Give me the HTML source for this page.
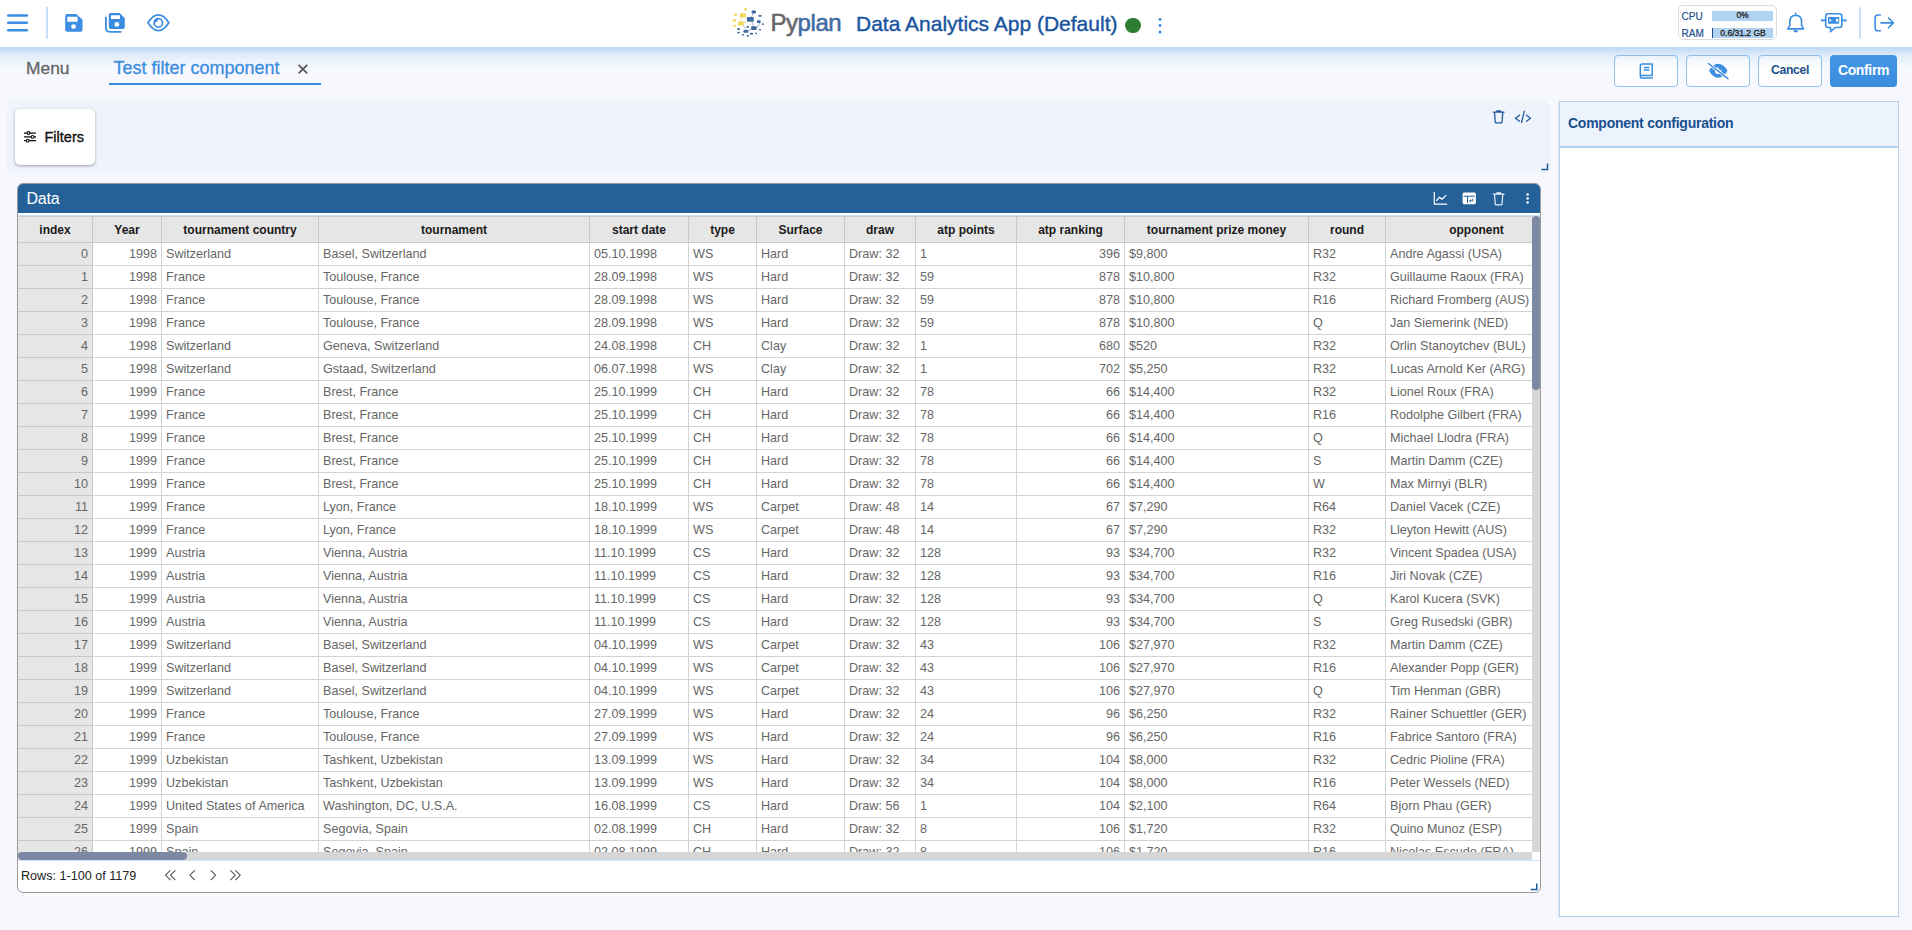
<!DOCTYPE html>
<html><head><meta charset="utf-8">
<style>
*{box-sizing:border-box;margin:0;padding:0}
html,body{width:1912px;height:930px;overflow:hidden;background:#f7f8fd;font-family:"Liberation Sans",sans-serif;position:relative}
.abs{position:absolute}
#top{position:absolute;left:0;top:0;width:1912px;height:47px;background:#fff}
#shade{position:absolute;left:0;top:47px;width:1912px;height:23px;z-index:50;background:linear-gradient(rgba(70,155,232,.36) 0px,rgba(70,155,232,.265) 3px,rgba(70,155,232,.136) 8px,rgba(70,155,232,.068) 13px,rgba(70,155,232,.028) 18px,rgba(70,155,232,0) 23px)}

.hc{position:absolute;top:0;height:26px;background:#e6e6e6;border-right:1px solid #c9c9c9;border-bottom:1px solid #c9c9c9;font-weight:bold;font-size:12px;line-height:25px;padding-top:1px;text-align:center;color:#1a1a1a;white-space:nowrap;overflow:hidden}
.row{position:absolute;left:0;height:23px;width:1600px}
.c{position:absolute;top:0;height:23px;background:#fff;border-right:1px solid #d3d3d3;border-bottom:1px solid #d3d3d3;font-size:12.6px;line-height:21px;color:#666;white-space:nowrap;overflow:hidden;padding:1px 4px 0 4px}
.c.r{text-align:right}
.c.ix{background:#e6e6e6;border-right-color:#c9c9c9;border-bottom-color:#c9c9c9}
</style></head>
<body>
<div id="shade"></div>
<div id="top">
<svg class="abs" style="left:0;top:0" width="1912" height="47" viewBox="0 0 1912 47">
 <g stroke="#3a8de0" stroke-width="2.6" stroke-linecap="round" fill="none">
  <line x1="8.3" y1="15.5" x2="26.8" y2="15.5"/>
  <line x1="8.3" y1="22.8" x2="26.8" y2="22.8"/>
  <line x1="8.3" y1="30.3" x2="26.8" y2="30.3"/>
 </g>
 <rect x="46" y="7" width="2" height="32" fill="#c5e0f8"/>
 <!-- save -->
 <path fill="#3a8de0" fill-rule="evenodd" d="M67.2 14H76.4L82.5 19.8V29.8Q82.5 31.8 80.5 31.8H67.2Q65.2 31.8 65.2 29.8V16Q65.2 14 67.2 14Z M67.3 16.8H77.6V21.7H67.3Z M73.55 26.6m-2.45 0a2.45 2.45 0 1 0 4.9 0a2.45 2.45 0 1 0 -4.9 0Z"/>
 <!-- save all -->
 <path fill="#3a8de0" fill-rule="evenodd" d="M110.8 13.1H119.8L124.8 18.2V26.9Q124.8 28.9 122.8 28.9H110.8Q108.8 28.9 108.8 26.9V15.1Q108.8 13.1 110.8 13.1Z M111 15.3H120V19.1H111Z M116.9 24.4m-2.4 0a2.4 2.4 0 1 0 4.8 0a2.4 2.4 0 1 0 -4.8 0Z"/>
 <path fill="none" stroke="#3a8de0" stroke-width="1.8" stroke-linecap="round" d="M105.9 17.4V27.4Q105.9 31.9 110.4 31.9H120.6"/>
 <!-- eye -->
 <path fill="none" stroke="#3a8de0" stroke-width="1.7" d="M148 22.7Q153 14.9 158.4 14.9Q163.8 14.9 168.8 22.7Q163.8 30.6 158.4 30.6Q153 30.6 148 22.7Z"/>
 <circle cx="158.3" cy="22.9" r="4.2" fill="none" stroke="#3a8de0" stroke-width="1.7"/>
 <path fill="#3a8de0" d="M154.3 22.5Q154.3 19 157.8 18.7L158.2 19.7Q157.8 21.9 155.2 22.6Z"/>
</svg>
<svg class="abs" style="left:0;top:0" width="1912" height="47" viewBox="0 0 1912 47"><g stroke="#3f6ba1" stroke-width="0.6" opacity="0.8"><line x1="753.8" y1="13" x2="751" y2="17.5"/><line x1="752" y1="21.5" x2="753.5" y2="26.5"/><line x1="756.5" y1="28" x2="760" y2="23"/><line x1="748" y1="31" x2="751.5" y2="29"/><line x1="743" y1="25" x2="747" y2="31"/><line x1="745.8" y1="19" x2="747" y2="19"/></g><g stroke="#f0d95e" stroke-width="0.6"><line x1="742" y1="17.4" x2="741" y2="21.6"/><line x1="743.8" y1="23" x2="747" y2="21.5"/></g><rect x="743.9" y="8.3" width="3.2" height="2.3" rx="0.8" fill="#f0d95e"/><rect x="733.8" y="13.6" width="3.2" height="2.2" rx="0.8" fill="#f0d95e"/><rect x="739.9" y="13.2" width="6" height="4.3" rx="0.8" fill="#f0d95e"/><rect x="732.6" y="19.2" width="3.3" height="2.5" rx="0.8" fill="#f0d95e"/><rect x="737.9" y="21.5" width="6" height="4" rx="0.8" fill="#f0d95e"/><rect x="732.9" y="25.1" width="3" height="1.9" rx="0.8" fill="#f0d95e"/><rect x="751.6" y="10.5" width="4.3" height="2.9" rx="0.8" fill="#3f6ba1"/><rect x="758.3" y="14.9" width="3.4" height="1.8" rx="0.8" fill="#3f6ba1"/><rect x="747" y="17.1" width="6.8" height="4.6" rx="0.8" fill="#3f6ba1"/><rect x="757" y="20.3" width="3.7" height="2.8" rx="0.8" fill="#3f6ba1"/><rect x="761.9" y="23.3" width="2.1" height="1.7" rx="0.8" fill="#3f6ba1"/><rect x="746.4" y="25.9" width="2.6" height="1.9" rx="0.8" fill="#3f6ba1"/><rect x="751.1" y="26.2" width="5.6" height="3.9" rx="0.8" fill="#3f6ba1"/><rect x="737.2" y="28.1" width="2.7" height="2" rx="0.8" fill="#3f6ba1"/><rect x="743.4" y="29.9" width="4.9" height="2.8" rx="0.8" fill="#3f6ba1"/><rect x="758.8" y="29" width="2.3" height="1.5" rx="0.8" fill="#3f6ba1"/><rect x="737.2" y="31.7" width="2.7" height="1.7" rx="0.8" fill="#3f6ba1"/><rect x="750" y="32.8" width="3.1" height="2" rx="0.8" fill="#3f6ba1"/><rect x="755.1" y="32.5" width="2" height="1.6" rx="0.8" fill="#3f6ba1"/><rect x="742" y="33.9" width="2.3" height="1.7" rx="0.8" fill="#3f6ba1"/><rect x="746.7" y="35" width="2.3" height="1.7" rx="0.8" fill="#3f6ba1"/></svg>
<div class="abs" style="left:770.5px;top:9px;font-size:24px;line-height:28px;letter-spacing:-0.45px;white-space:nowrap;-webkit-text-stroke:0.3px currentColor"><span style="color:#686868;-webkit-text-stroke:0.55px #686868">Py</span><span style="color:#3f6ba1;-webkit-text-stroke:0.55px #3f6ba1">plan</span></div>
<div class="abs" style="left:856px;top:12px;font-size:21px;line-height:24px;color:#1a55a0;white-space:nowrap;-webkit-text-stroke:0.4px #1a55a0">Data Analytics App (Default)</div>
<div class="abs" style="left:1125px;top:17.5px;width:15.6px;height:15.6px;border-radius:50%;background:#2e7d32"></div>
<svg class="abs" style="left:1150px;top:15px" width="20" height="22"><g fill="#3a8de0"><circle cx="10" cy="4.3" r="1.5"/><circle cx="10" cy="10.6" r="1.5"/><circle cx="10" cy="17" r="1.5"/></g></svg>
<div class="abs" style="left:1677.5px;top:5.3px;width:99px;height:35.2px;border:1px solid #dcdcdc;border-radius:5px;background:#fff"></div>
<div class="abs" style="left:1681.5px;top:10.5px;font-size:10px;line-height:12px;color:#1b4f8c;-webkit-text-stroke:0.2px #1b4f8c">CPU</div>
<div class="abs" style="left:1681.5px;top:27.8px;font-size:10px;line-height:12px;color:#1b4f8c;-webkit-text-stroke:0.2px #1b4f8c">RAM</div>
<div class="abs" style="left:1712.2px;top:11.1px;width:60.7px;height:9.5px;background:#b1d3f2;font-size:8.5px;line-height:9.5px;text-align:center;color:#222;-webkit-text-stroke:0.3px #222">0%</div>
<div class="abs" style="left:1712.2px;top:28.1px;width:60.7px;height:9.6px;background:#b1d3f2;font-size:8.5px;line-height:10px;text-align:center;color:#222;border-left:1.2px solid #1b4f8c;-webkit-text-stroke:0.3px #222">0.6/31.2 GB</div>
<svg class="abs" style="left:0;top:0" width="1912" height="47" viewBox="0 0 1912 47">
 <g fill="none" stroke="#3a8de0" stroke-width="1.6" stroke-linecap="round" stroke-linejoin="round">
  <path d="M1795.7 13.3V15.2M1789.8 25.6V21.8Q1789.8 15.4 1795.7 15.2Q1801.6 15.4 1801.6 21.8V25.6L1803.7 28.9H1787.7L1789.8 25.6Z"/>
  <path d="M1825.7 16.2Q1825.7 13.8 1828.1 13.8H1839.4Q1841.8 13.8 1841.8 16.2V25.1Q1841.8 27.5 1839.4 27.5H1835.2L1830.6 31.6V27.5H1828.1Q1825.7 27.5 1825.7 25.1Z"/>
  <path d="M1822 20.4H1825.7M1841.8 20.4H1845.5"/>
  <path d="M1880.4 15H1878Q1875.1 15 1875.1 17.9V27.9Q1875.1 30.8 1878 30.8H1880.4M1881 22.9H1893.4M1888.5 18L1893.4 22.9L1888.5 27.8"/>
 </g>
 <path d="M1793.2 30.2H1798.2Q1798 32.6 1795.7 32.6Q1793.4 32.6 1793.2 30.2Z" fill="#3a8de0"/>
 <rect x="1828" y="16.9" width="11.2" height="6.9" rx="0.8" fill="#3a8de0"/>
 <path d="M1829.5 18.7L1831.8 20.3L1829.5 21.9Z" fill="#fff"/><rect x="1836" y="18.8" width="2.2" height="2.8" fill="#fff"/>
 <circle cx="1821.9" cy="20.4" r="1" fill="#3a8de0"/><circle cx="1845.6" cy="20.4" r="1" fill="#3a8de0"/>
 <rect x="1859" y="7.3" width="2" height="31.3" fill="#c5e0f8"/>
</svg>
</div>
<div class="abs" id="tabs">
<div class="abs" style="left:26px;top:57.5px;font-size:17.4px;line-height:20px;color:#646464;white-space:nowrap;-webkit-text-stroke:0.3px #646464">Menu</div>
<div class="abs" style="left:113.5px;top:58px;font-size:18px;line-height:20px;color:#3a8de0;white-space:nowrap;-webkit-text-stroke:0.3px #3a8de0">Test filter component</div>
<svg class="abs" style="left:0;top:0" width="340" height="100"><path d="M298.6 64.8L307.2 73.4M307.2 64.8L298.6 73.4" stroke="#555" stroke-width="1.7"/></svg>
<div class="abs" style="left:109px;top:82.7px;width:212px;height:2px;background:#3a8de0"></div>
</div>
<div class="abs" style="left:1614px;top:55px;width:64px;height:32px;border:1px solid #8ec0f0;border-radius:4px;background:#fff"></div>
<div class="abs" style="left:1686px;top:55px;width:64px;height:32px;border:1px solid #8ec0f0;border-radius:4px;background:#fff"></div>
<div class="abs" style="left:1758px;top:55px;width:64px;height:32px;border:1px solid #8ec0f0;border-radius:4px;background:#fff;font-size:12.2px;letter-spacing:-0.3px;font-weight:bold;color:#1c4f8a;text-align:center;line-height:28px">Cancel</div>
<div class="abs" style="left:1830px;top:55px;width:67px;height:32px;border-radius:4px;background:linear-gradient(#4495e4,#3a8ddf);font-size:14px;letter-spacing:-0.35px;font-weight:bold;color:#fff;text-align:center;line-height:30px">Confirm</div>
<svg class="abs" style="left:1600px;top:45px" width="312" height="55" viewBox="0 0 312 55">
 <g fill="none" stroke="#3a8de0" stroke-width="1.4" stroke-linejoin="round">
  <path d="M40.3 30.6V21Q40.3 19 42.3 19H52.2V30.5H42.3Q40.3 30.5 40.3 31.9Q40.3 33.1 42.1 33.1H52.9" stroke-width="1.5"/>
  <path d="M43.9 22.4H49.4M43.9 25H49.4" stroke-width="1.5"/>
 </g>
 <g><path fill-rule="evenodd" d="M109 25.8Q113 18.8 118.2 18.8Q123.5 18.8 127.5 25.8Q123.5 32.8 118.2 32.8Q113 32.8 109 25.8Z M118.2 25.8m-3.3 0a3.3 3.3 0 1 0 6.6 0a3.3 3.3 0 1 0 -6.6 0Z" fill="#3a8de0"/>
 <path d="M118.4 23.2L119.3 21.8Q121.2 22.6 121.4 25.2L120.2 25.6Z" fill="#3a8de0"/>
 <path d="M108.4 18.5L128 33.6" stroke="#fff" stroke-width="3"/>
 <path d="M108.4 18.5L128 33.6" stroke="#3a8de0" stroke-width="1.5" stroke-linecap="round"/></g>
</svg>


<!-- filters panel -->
<div class="abs" style="left:7px;top:101px;width:1544px;height:72px;background:#fff"></div>
<div class="abs" style="left:7px;top:101px;width:1544px;height:72px;background:#eff3fb;border-radius:5px"></div>
<div class="abs" style="left:15px;top:109px;width:80px;height:56px;background:#fff;border-radius:5px;box-shadow:0 1px 3px rgba(0,0,0,.35)"></div>
<svg class="abs" style="left:20px;top:126px" width="22" height="22" viewBox="0 0 22 22">
 <g stroke="#111" stroke-width="1.3" fill="none">
  <path d="M4 7.2H16M4 10.9H16M4 14.7H16"/>
 </g>
 <g fill="#fff" stroke="#111" stroke-width="1.1"><circle cx="8.5" cy="7" r="1.4"/><circle cx="12.6" cy="10.9" r="1.4"/><circle cx="7.7" cy="14.8" r="1.4"/></g>
</svg>
<div class="abs" style="left:44.5px;top:128px;font-size:14.5px;line-height:18px;color:#111;-webkit-text-stroke:0.35px #111">Filters</div>
<svg class="abs" style="left:1488px;top:106px" width="64" height="68" viewBox="0 0 64 68">
 <g fill="none" stroke="#1f5a9e" stroke-width="1.3" stroke-linecap="round" stroke-linejoin="round">
  <path d="M5.3 6.2H16M8.8 6.2V4.8H12.6V6.2M6.5 6.2L7.3 16.2Q7.4 16.9 8.1 16.9H13.2Q13.9 16.9 14 16.2L14.8 6.2"/>
  <path d="M31.5 9.2L27.5 12.2L31.5 15.2M38.5 9.2L42.5 12.2L38.5 15.2M36.3 5.2L33.6 16.3"/>
  <path d="M59.5 57.5V63.5H53.5" stroke-width="1.5" stroke-linecap="butt"/>
 </g>
</svg>

<!-- data panel -->
<div class="abs" style="left:17px;top:183px;width:1524px;height:710px;border:1px solid #9a9a9a;border-radius:6px;background:#fff;overflow:hidden">
 <div class="abs" style="left:0;top:0;width:1524px;height:29px;background:#256199"></div>
 <div class="abs" style="left:0;top:29px;width:1524px;height:2px;background:#fff"></div>
 <div class="abs" style="left:0;top:31px;width:1524px;height:1px;background:#c5e0f7"></div>
 <div class="abs" style="left:0;top:32px;width:1524px;height:1px;background:#cccccc"></div>
</div>
<div class="abs" style="left:26.5px;top:189.5px;font-size:16px;letter-spacing:-0.2px;line-height:18px;color:#fff">Data</div>
<svg class="abs" style="left:1428px;top:186px" width="112" height="26" viewBox="0 0 112 26">
 <g fill="none" stroke="#fff" stroke-width="1.2" stroke-linecap="round" stroke-linejoin="round">
  <path d="M6.3 6.4V18.2H18.6M8.6 14.5L11.6 11.2L14 13.3L18 9.4"/>
  <path d="M65.3 8.2H76M68.8 8.2V6.8H72.6V8.2M66.5 8.2L67.3 18.2Q67.4 18.9 68.1 18.9H73.2Q73.9 18.9 74 18.2L74.8 8.2" stroke="#e8eef7"/>
 </g>
 <rect x="34.6" y="6.6" width="13.3" height="11.6" rx="1.6" fill="#fff"/>
 <path d="M35.6 10.2H46.9M39.5 10.2V17.2" stroke="#256199" stroke-width="1"/>
 <path d="M41.5 14.8H44.8V12.6M42.8 13.6L41.5 14.8L42.8 16" stroke="#256199" stroke-width="0.9" fill="none"/>
 <g fill="#fff"><circle cx="99.6" cy="8.6" r="1.25"/><circle cx="99.6" cy="12.6" r="1.25"/><circle cx="99.6" cy="16.6" r="1.25"/></g>
</svg>
<div class="abs" style="left:18px;top:217px;width:1514px;height:635px;overflow:hidden;background:#fff">
<div class="hc" style="left:0px;width:75px">index</div><div class="hc" style="left:75px;width:69px">Year</div><div class="hc" style="left:144px;width:157px">tournament country</div><div class="hc" style="left:301px;width:271px">tournament</div><div class="hc" style="left:572px;width:99px">start date</div><div class="hc" style="left:671px;width:68px">type</div><div class="hc" style="left:739px;width:88px">Surface</div><div class="hc" style="left:827px;width:71px">draw</div><div class="hc" style="left:898px;width:101px">atp points</div><div class="hc" style="left:999px;width:108px">atp ranking</div><div class="hc" style="left:1107px;width:184px">tournament prize money</div><div class="hc" style="left:1291px;width:77px">round</div><div class="hc" style="left:1368px;width:182px">opponent</div>
<div class="row" style="top:26px"><div class="c r ix" style="left:0px;width:75px">0</div><div class="c r" style="left:75px;width:69px">1998</div><div class="c" style="left:144px;width:157px">Switzerland</div><div class="c" style="left:301px;width:271px">Basel, Switzerland</div><div class="c" style="left:572px;width:99px">05.10.1998</div><div class="c" style="left:671px;width:68px">WS</div><div class="c" style="left:739px;width:88px">Hard</div><div class="c" style="left:827px;width:71px">Draw: 32</div><div class="c" style="left:898px;width:101px">1</div><div class="c r" style="left:999px;width:108px">396</div><div class="c" style="left:1107px;width:184px">$9,800</div><div class="c" style="left:1291px;width:77px">R32</div><div class="c" style="left:1368px;width:182px">Andre Agassi (USA)</div></div><div class="row" style="top:49px"><div class="c r ix" style="left:0px;width:75px">1</div><div class="c r" style="left:75px;width:69px">1998</div><div class="c" style="left:144px;width:157px">France</div><div class="c" style="left:301px;width:271px">Toulouse, France</div><div class="c" style="left:572px;width:99px">28.09.1998</div><div class="c" style="left:671px;width:68px">WS</div><div class="c" style="left:739px;width:88px">Hard</div><div class="c" style="left:827px;width:71px">Draw: 32</div><div class="c" style="left:898px;width:101px">59</div><div class="c r" style="left:999px;width:108px">878</div><div class="c" style="left:1107px;width:184px">$10,800</div><div class="c" style="left:1291px;width:77px">R32</div><div class="c" style="left:1368px;width:182px">Guillaume Raoux (FRA)</div></div><div class="row" style="top:72px"><div class="c r ix" style="left:0px;width:75px">2</div><div class="c r" style="left:75px;width:69px">1998</div><div class="c" style="left:144px;width:157px">France</div><div class="c" style="left:301px;width:271px">Toulouse, France</div><div class="c" style="left:572px;width:99px">28.09.1998</div><div class="c" style="left:671px;width:68px">WS</div><div class="c" style="left:739px;width:88px">Hard</div><div class="c" style="left:827px;width:71px">Draw: 32</div><div class="c" style="left:898px;width:101px">59</div><div class="c r" style="left:999px;width:108px">878</div><div class="c" style="left:1107px;width:184px">$10,800</div><div class="c" style="left:1291px;width:77px">R16</div><div class="c" style="left:1368px;width:182px">Richard Fromberg (AUS)</div></div><div class="row" style="top:95px"><div class="c r ix" style="left:0px;width:75px">3</div><div class="c r" style="left:75px;width:69px">1998</div><div class="c" style="left:144px;width:157px">France</div><div class="c" style="left:301px;width:271px">Toulouse, France</div><div class="c" style="left:572px;width:99px">28.09.1998</div><div class="c" style="left:671px;width:68px">WS</div><div class="c" style="left:739px;width:88px">Hard</div><div class="c" style="left:827px;width:71px">Draw: 32</div><div class="c" style="left:898px;width:101px">59</div><div class="c r" style="left:999px;width:108px">878</div><div class="c" style="left:1107px;width:184px">$10,800</div><div class="c" style="left:1291px;width:77px">Q</div><div class="c" style="left:1368px;width:182px">Jan Siemerink (NED)</div></div><div class="row" style="top:118px"><div class="c r ix" style="left:0px;width:75px">4</div><div class="c r" style="left:75px;width:69px">1998</div><div class="c" style="left:144px;width:157px">Switzerland</div><div class="c" style="left:301px;width:271px">Geneva, Switzerland</div><div class="c" style="left:572px;width:99px">24.08.1998</div><div class="c" style="left:671px;width:68px">CH</div><div class="c" style="left:739px;width:88px">Clay</div><div class="c" style="left:827px;width:71px">Draw: 32</div><div class="c" style="left:898px;width:101px">1</div><div class="c r" style="left:999px;width:108px">680</div><div class="c" style="left:1107px;width:184px">$520</div><div class="c" style="left:1291px;width:77px">R32</div><div class="c" style="left:1368px;width:182px">Orlin Stanoytchev (BUL)</div></div><div class="row" style="top:141px"><div class="c r ix" style="left:0px;width:75px">5</div><div class="c r" style="left:75px;width:69px">1998</div><div class="c" style="left:144px;width:157px">Switzerland</div><div class="c" style="left:301px;width:271px">Gstaad, Switzerland</div><div class="c" style="left:572px;width:99px">06.07.1998</div><div class="c" style="left:671px;width:68px">WS</div><div class="c" style="left:739px;width:88px">Clay</div><div class="c" style="left:827px;width:71px">Draw: 32</div><div class="c" style="left:898px;width:101px">1</div><div class="c r" style="left:999px;width:108px">702</div><div class="c" style="left:1107px;width:184px">$5,250</div><div class="c" style="left:1291px;width:77px">R32</div><div class="c" style="left:1368px;width:182px">Lucas Arnold Ker (ARG)</div></div><div class="row" style="top:164px"><div class="c r ix" style="left:0px;width:75px">6</div><div class="c r" style="left:75px;width:69px">1999</div><div class="c" style="left:144px;width:157px">France</div><div class="c" style="left:301px;width:271px">Brest, France</div><div class="c" style="left:572px;width:99px">25.10.1999</div><div class="c" style="left:671px;width:68px">CH</div><div class="c" style="left:739px;width:88px">Hard</div><div class="c" style="left:827px;width:71px">Draw: 32</div><div class="c" style="left:898px;width:101px">78</div><div class="c r" style="left:999px;width:108px">66</div><div class="c" style="left:1107px;width:184px">$14,400</div><div class="c" style="left:1291px;width:77px">R32</div><div class="c" style="left:1368px;width:182px">Lionel Roux (FRA)</div></div><div class="row" style="top:187px"><div class="c r ix" style="left:0px;width:75px">7</div><div class="c r" style="left:75px;width:69px">1999</div><div class="c" style="left:144px;width:157px">France</div><div class="c" style="left:301px;width:271px">Brest, France</div><div class="c" style="left:572px;width:99px">25.10.1999</div><div class="c" style="left:671px;width:68px">CH</div><div class="c" style="left:739px;width:88px">Hard</div><div class="c" style="left:827px;width:71px">Draw: 32</div><div class="c" style="left:898px;width:101px">78</div><div class="c r" style="left:999px;width:108px">66</div><div class="c" style="left:1107px;width:184px">$14,400</div><div class="c" style="left:1291px;width:77px">R16</div><div class="c" style="left:1368px;width:182px">Rodolphe Gilbert (FRA)</div></div><div class="row" style="top:210px"><div class="c r ix" style="left:0px;width:75px">8</div><div class="c r" style="left:75px;width:69px">1999</div><div class="c" style="left:144px;width:157px">France</div><div class="c" style="left:301px;width:271px">Brest, France</div><div class="c" style="left:572px;width:99px">25.10.1999</div><div class="c" style="left:671px;width:68px">CH</div><div class="c" style="left:739px;width:88px">Hard</div><div class="c" style="left:827px;width:71px">Draw: 32</div><div class="c" style="left:898px;width:101px">78</div><div class="c r" style="left:999px;width:108px">66</div><div class="c" style="left:1107px;width:184px">$14,400</div><div class="c" style="left:1291px;width:77px">Q</div><div class="c" style="left:1368px;width:182px">Michael Llodra (FRA)</div></div><div class="row" style="top:233px"><div class="c r ix" style="left:0px;width:75px">9</div><div class="c r" style="left:75px;width:69px">1999</div><div class="c" style="left:144px;width:157px">France</div><div class="c" style="left:301px;width:271px">Brest, France</div><div class="c" style="left:572px;width:99px">25.10.1999</div><div class="c" style="left:671px;width:68px">CH</div><div class="c" style="left:739px;width:88px">Hard</div><div class="c" style="left:827px;width:71px">Draw: 32</div><div class="c" style="left:898px;width:101px">78</div><div class="c r" style="left:999px;width:108px">66</div><div class="c" style="left:1107px;width:184px">$14,400</div><div class="c" style="left:1291px;width:77px">S</div><div class="c" style="left:1368px;width:182px">Martin Damm (CZE)</div></div><div class="row" style="top:256px"><div class="c r ix" style="left:0px;width:75px">10</div><div class="c r" style="left:75px;width:69px">1999</div><div class="c" style="left:144px;width:157px">France</div><div class="c" style="left:301px;width:271px">Brest, France</div><div class="c" style="left:572px;width:99px">25.10.1999</div><div class="c" style="left:671px;width:68px">CH</div><div class="c" style="left:739px;width:88px">Hard</div><div class="c" style="left:827px;width:71px">Draw: 32</div><div class="c" style="left:898px;width:101px">78</div><div class="c r" style="left:999px;width:108px">66</div><div class="c" style="left:1107px;width:184px">$14,400</div><div class="c" style="left:1291px;width:77px">W</div><div class="c" style="left:1368px;width:182px">Max Mirnyi (BLR)</div></div><div class="row" style="top:279px"><div class="c r ix" style="left:0px;width:75px">11</div><div class="c r" style="left:75px;width:69px">1999</div><div class="c" style="left:144px;width:157px">France</div><div class="c" style="left:301px;width:271px">Lyon, France</div><div class="c" style="left:572px;width:99px">18.10.1999</div><div class="c" style="left:671px;width:68px">WS</div><div class="c" style="left:739px;width:88px">Carpet</div><div class="c" style="left:827px;width:71px">Draw: 48</div><div class="c" style="left:898px;width:101px">14</div><div class="c r" style="left:999px;width:108px">67</div><div class="c" style="left:1107px;width:184px">$7,290</div><div class="c" style="left:1291px;width:77px">R64</div><div class="c" style="left:1368px;width:182px">Daniel Vacek (CZE)</div></div><div class="row" style="top:302px"><div class="c r ix" style="left:0px;width:75px">12</div><div class="c r" style="left:75px;width:69px">1999</div><div class="c" style="left:144px;width:157px">France</div><div class="c" style="left:301px;width:271px">Lyon, France</div><div class="c" style="left:572px;width:99px">18.10.1999</div><div class="c" style="left:671px;width:68px">WS</div><div class="c" style="left:739px;width:88px">Carpet</div><div class="c" style="left:827px;width:71px">Draw: 48</div><div class="c" style="left:898px;width:101px">14</div><div class="c r" style="left:999px;width:108px">67</div><div class="c" style="left:1107px;width:184px">$7,290</div><div class="c" style="left:1291px;width:77px">R32</div><div class="c" style="left:1368px;width:182px">Lleyton Hewitt (AUS)</div></div><div class="row" style="top:325px"><div class="c r ix" style="left:0px;width:75px">13</div><div class="c r" style="left:75px;width:69px">1999</div><div class="c" style="left:144px;width:157px">Austria</div><div class="c" style="left:301px;width:271px">Vienna, Austria</div><div class="c" style="left:572px;width:99px">11.10.1999</div><div class="c" style="left:671px;width:68px">CS</div><div class="c" style="left:739px;width:88px">Hard</div><div class="c" style="left:827px;width:71px">Draw: 32</div><div class="c" style="left:898px;width:101px">128</div><div class="c r" style="left:999px;width:108px">93</div><div class="c" style="left:1107px;width:184px">$34,700</div><div class="c" style="left:1291px;width:77px">R32</div><div class="c" style="left:1368px;width:182px">Vincent Spadea (USA)</div></div><div class="row" style="top:348px"><div class="c r ix" style="left:0px;width:75px">14</div><div class="c r" style="left:75px;width:69px">1999</div><div class="c" style="left:144px;width:157px">Austria</div><div class="c" style="left:301px;width:271px">Vienna, Austria</div><div class="c" style="left:572px;width:99px">11.10.1999</div><div class="c" style="left:671px;width:68px">CS</div><div class="c" style="left:739px;width:88px">Hard</div><div class="c" style="left:827px;width:71px">Draw: 32</div><div class="c" style="left:898px;width:101px">128</div><div class="c r" style="left:999px;width:108px">93</div><div class="c" style="left:1107px;width:184px">$34,700</div><div class="c" style="left:1291px;width:77px">R16</div><div class="c" style="left:1368px;width:182px">Jiri Novak (CZE)</div></div><div class="row" style="top:371px"><div class="c r ix" style="left:0px;width:75px">15</div><div class="c r" style="left:75px;width:69px">1999</div><div class="c" style="left:144px;width:157px">Austria</div><div class="c" style="left:301px;width:271px">Vienna, Austria</div><div class="c" style="left:572px;width:99px">11.10.1999</div><div class="c" style="left:671px;width:68px">CS</div><div class="c" style="left:739px;width:88px">Hard</div><div class="c" style="left:827px;width:71px">Draw: 32</div><div class="c" style="left:898px;width:101px">128</div><div class="c r" style="left:999px;width:108px">93</div><div class="c" style="left:1107px;width:184px">$34,700</div><div class="c" style="left:1291px;width:77px">Q</div><div class="c" style="left:1368px;width:182px">Karol Kucera (SVK)</div></div><div class="row" style="top:394px"><div class="c r ix" style="left:0px;width:75px">16</div><div class="c r" style="left:75px;width:69px">1999</div><div class="c" style="left:144px;width:157px">Austria</div><div class="c" style="left:301px;width:271px">Vienna, Austria</div><div class="c" style="left:572px;width:99px">11.10.1999</div><div class="c" style="left:671px;width:68px">CS</div><div class="c" style="left:739px;width:88px">Hard</div><div class="c" style="left:827px;width:71px">Draw: 32</div><div class="c" style="left:898px;width:101px">128</div><div class="c r" style="left:999px;width:108px">93</div><div class="c" style="left:1107px;width:184px">$34,700</div><div class="c" style="left:1291px;width:77px">S</div><div class="c" style="left:1368px;width:182px">Greg Rusedski (GBR)</div></div><div class="row" style="top:417px"><div class="c r ix" style="left:0px;width:75px">17</div><div class="c r" style="left:75px;width:69px">1999</div><div class="c" style="left:144px;width:157px">Switzerland</div><div class="c" style="left:301px;width:271px">Basel, Switzerland</div><div class="c" style="left:572px;width:99px">04.10.1999</div><div class="c" style="left:671px;width:68px">WS</div><div class="c" style="left:739px;width:88px">Carpet</div><div class="c" style="left:827px;width:71px">Draw: 32</div><div class="c" style="left:898px;width:101px">43</div><div class="c r" style="left:999px;width:108px">106</div><div class="c" style="left:1107px;width:184px">$27,970</div><div class="c" style="left:1291px;width:77px">R32</div><div class="c" style="left:1368px;width:182px">Martin Damm (CZE)</div></div><div class="row" style="top:440px"><div class="c r ix" style="left:0px;width:75px">18</div><div class="c r" style="left:75px;width:69px">1999</div><div class="c" style="left:144px;width:157px">Switzerland</div><div class="c" style="left:301px;width:271px">Basel, Switzerland</div><div class="c" style="left:572px;width:99px">04.10.1999</div><div class="c" style="left:671px;width:68px">WS</div><div class="c" style="left:739px;width:88px">Carpet</div><div class="c" style="left:827px;width:71px">Draw: 32</div><div class="c" style="left:898px;width:101px">43</div><div class="c r" style="left:999px;width:108px">106</div><div class="c" style="left:1107px;width:184px">$27,970</div><div class="c" style="left:1291px;width:77px">R16</div><div class="c" style="left:1368px;width:182px">Alexander Popp (GER)</div></div><div class="row" style="top:463px"><div class="c r ix" style="left:0px;width:75px">19</div><div class="c r" style="left:75px;width:69px">1999</div><div class="c" style="left:144px;width:157px">Switzerland</div><div class="c" style="left:301px;width:271px">Basel, Switzerland</div><div class="c" style="left:572px;width:99px">04.10.1999</div><div class="c" style="left:671px;width:68px">WS</div><div class="c" style="left:739px;width:88px">Carpet</div><div class="c" style="left:827px;width:71px">Draw: 32</div><div class="c" style="left:898px;width:101px">43</div><div class="c r" style="left:999px;width:108px">106</div><div class="c" style="left:1107px;width:184px">$27,970</div><div class="c" style="left:1291px;width:77px">Q</div><div class="c" style="left:1368px;width:182px">Tim Henman (GBR)</div></div><div class="row" style="top:486px"><div class="c r ix" style="left:0px;width:75px">20</div><div class="c r" style="left:75px;width:69px">1999</div><div class="c" style="left:144px;width:157px">France</div><div class="c" style="left:301px;width:271px">Toulouse, France</div><div class="c" style="left:572px;width:99px">27.09.1999</div><div class="c" style="left:671px;width:68px">WS</div><div class="c" style="left:739px;width:88px">Hard</div><div class="c" style="left:827px;width:71px">Draw: 32</div><div class="c" style="left:898px;width:101px">24</div><div class="c r" style="left:999px;width:108px">96</div><div class="c" style="left:1107px;width:184px">$6,250</div><div class="c" style="left:1291px;width:77px">R32</div><div class="c" style="left:1368px;width:182px">Rainer Schuettler (GER)</div></div><div class="row" style="top:509px"><div class="c r ix" style="left:0px;width:75px">21</div><div class="c r" style="left:75px;width:69px">1999</div><div class="c" style="left:144px;width:157px">France</div><div class="c" style="left:301px;width:271px">Toulouse, France</div><div class="c" style="left:572px;width:99px">27.09.1999</div><div class="c" style="left:671px;width:68px">WS</div><div class="c" style="left:739px;width:88px">Hard</div><div class="c" style="left:827px;width:71px">Draw: 32</div><div class="c" style="left:898px;width:101px">24</div><div class="c r" style="left:999px;width:108px">96</div><div class="c" style="left:1107px;width:184px">$6,250</div><div class="c" style="left:1291px;width:77px">R16</div><div class="c" style="left:1368px;width:182px">Fabrice Santoro (FRA)</div></div><div class="row" style="top:532px"><div class="c r ix" style="left:0px;width:75px">22</div><div class="c r" style="left:75px;width:69px">1999</div><div class="c" style="left:144px;width:157px">Uzbekistan</div><div class="c" style="left:301px;width:271px">Tashkent, Uzbekistan</div><div class="c" style="left:572px;width:99px">13.09.1999</div><div class="c" style="left:671px;width:68px">WS</div><div class="c" style="left:739px;width:88px">Hard</div><div class="c" style="left:827px;width:71px">Draw: 32</div><div class="c" style="left:898px;width:101px">34</div><div class="c r" style="left:999px;width:108px">104</div><div class="c" style="left:1107px;width:184px">$8,000</div><div class="c" style="left:1291px;width:77px">R32</div><div class="c" style="left:1368px;width:182px">Cedric Pioline (FRA)</div></div><div class="row" style="top:555px"><div class="c r ix" style="left:0px;width:75px">23</div><div class="c r" style="left:75px;width:69px">1999</div><div class="c" style="left:144px;width:157px">Uzbekistan</div><div class="c" style="left:301px;width:271px">Tashkent, Uzbekistan</div><div class="c" style="left:572px;width:99px">13.09.1999</div><div class="c" style="left:671px;width:68px">WS</div><div class="c" style="left:739px;width:88px">Hard</div><div class="c" style="left:827px;width:71px">Draw: 32</div><div class="c" style="left:898px;width:101px">34</div><div class="c r" style="left:999px;width:108px">104</div><div class="c" style="left:1107px;width:184px">$8,000</div><div class="c" style="left:1291px;width:77px">R16</div><div class="c" style="left:1368px;width:182px">Peter Wessels (NED)</div></div><div class="row" style="top:578px"><div class="c r ix" style="left:0px;width:75px">24</div><div class="c r" style="left:75px;width:69px">1999</div><div class="c" style="left:144px;width:157px">United States of America</div><div class="c" style="left:301px;width:271px">Washington, DC, U.S.A.</div><div class="c" style="left:572px;width:99px">16.08.1999</div><div class="c" style="left:671px;width:68px">CS</div><div class="c" style="left:739px;width:88px">Hard</div><div class="c" style="left:827px;width:71px">Draw: 56</div><div class="c" style="left:898px;width:101px">1</div><div class="c r" style="left:999px;width:108px">104</div><div class="c" style="left:1107px;width:184px">$2,100</div><div class="c" style="left:1291px;width:77px">R64</div><div class="c" style="left:1368px;width:182px">Bjorn Phau (GER)</div></div><div class="row" style="top:601px"><div class="c r ix" style="left:0px;width:75px">25</div><div class="c r" style="left:75px;width:69px">1999</div><div class="c" style="left:144px;width:157px">Spain</div><div class="c" style="left:301px;width:271px">Segovia, Spain</div><div class="c" style="left:572px;width:99px">02.08.1999</div><div class="c" style="left:671px;width:68px">CH</div><div class="c" style="left:739px;width:88px">Hard</div><div class="c" style="left:827px;width:71px">Draw: 32</div><div class="c" style="left:898px;width:101px">8</div><div class="c r" style="left:999px;width:108px">106</div><div class="c" style="left:1107px;width:184px">$1,720</div><div class="c" style="left:1291px;width:77px">R32</div><div class="c" style="left:1368px;width:182px">Quino Munoz (ESP)</div></div><div class="row" style="top:624px"><div class="c r ix" style="left:0px;width:75px">26</div><div class="c r" style="left:75px;width:69px">1999</div><div class="c" style="left:144px;width:157px">Spain</div><div class="c" style="left:301px;width:271px">Segovia, Spain</div><div class="c" style="left:572px;width:99px">02.08.1999</div><div class="c" style="left:671px;width:68px">CH</div><div class="c" style="left:739px;width:88px">Hard</div><div class="c" style="left:827px;width:71px">Draw: 32</div><div class="c" style="left:898px;width:101px">8</div><div class="c r" style="left:999px;width:108px">106</div><div class="c" style="left:1107px;width:184px">$1,720</div><div class="c" style="left:1291px;width:77px">R16</div><div class="c" style="left:1368px;width:182px">Nicolas Escudo (FRA)</div></div>
</div>
<!-- scrollbars -->
<div class="abs" style="left:1532px;top:216px;width:8px;height:636px;background:#d6d6d6"></div>
<div class="abs" style="left:1532px;top:216px;width:8px;height:173.5px;background:#7d89a4;border-radius:4px"></div>
<div class="abs" style="left:18px;top:852px;width:1514px;height:8px;background:#d6d6d6"></div>
<div class="abs" style="left:18px;top:852px;width:168.5px;height:8px;background:#7d89a4;border-radius:4px"></div>
<div class="abs" style="left:1532px;top:852px;width:8px;height:8px;background:#fff"></div>
<div class="abs" style="left:18px;top:860px;width:1522px;height:1px;background:#cfe3f7"></div>
<div class="abs" style="left:21px;top:868px;font-size:12.6px;line-height:16px;color:#222;white-space:nowrap">Rows: 1-100 of 1179</div>
<svg class="abs" style="left:160px;top:866px" width="90" height="18" viewBox="0 0 90 18">
 <g fill="none" stroke="#555" stroke-width="1.1" stroke-linejoin="round">
  <path d="M10.4 4.3L5.5 9.2L10.4 14.1M15.4 4.3L10.5 9.2L15.4 14.1"/>
  <path d="M34.8 4.3L29.9 9.2L34.8 14.1"/>
  <path d="M50.7 4.3L55.6 9.2L50.7 14.1"/>
  <path d="M70.4 4.3L75.3 9.2L70.4 14.1M75.4 4.3L80.3 9.2L75.4 14.1"/>
 </g>
</svg>
<svg class="abs" style="left:1525px;top:878px" width="16" height="16"><path d="M11.8 5.4V11.6H5.6" fill="none" stroke="#1f5a9e" stroke-width="1.5"/></svg>

<!-- config panel -->
<div class="abs" style="left:1559px;top:101px;width:340px;height:816px;border:1px solid #b5d0ea;background:#fff;box-shadow:-1px 0 2px rgba(0,0,0,0.06)"></div>
<div class="abs" style="left:1560px;top:102px;width:338px;height:46px;background:#edf3fd;border-bottom:2px solid #b5d0ea"></div>
<div class="abs" style="left:1568px;top:114.5px;font-size:14px;letter-spacing:-0.25px;line-height:16px;font-weight:bold;color:#1a4f8f;white-space:nowrap">Component configuration</div>
</body></html>
